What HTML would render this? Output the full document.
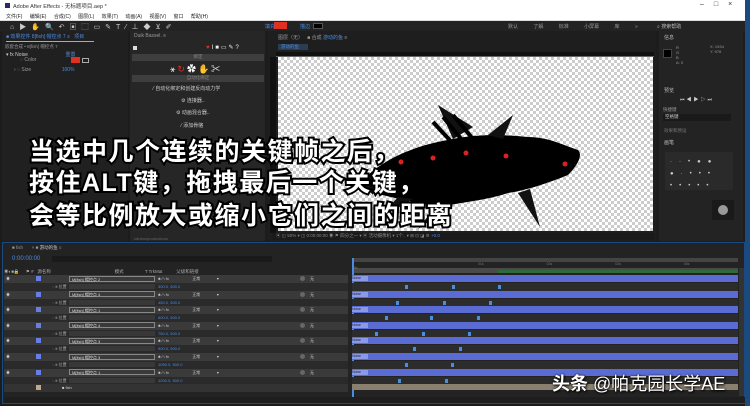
<!DOCTYPE html>
<html><head><meta charset="utf-8"><style>
*{margin:0;padding:0;box-sizing:border-box}
body{width:750px;height:406px;overflow:hidden;background:#1c1c1c;position:relative;font-family:"Liberation Sans","Noto Sans CJK SC",sans-serif;font-size:5px;color:#999}
.a{position:absolute}
.chk{background-color:#fff;background-image:linear-gradient(45deg,#ccc 25%,transparent 25%,transparent 75%,#ccc 75%),linear-gradient(45deg,#ccc 25%,transparent 25%,transparent 75%,#ccc 75%);background-size:6px 6px;background-position:0 0,3px 3px}
.sub{position:absolute;left:29px;color:#fff;font-size:25px;font-weight:bold;-webkit-text-stroke:4px #000;paint-order:stroke fill;letter-spacing:1.5px;white-space:nowrap;line-height:28px;font-family:"Liberation Sans","Noto Sans CJK SC",sans-serif}
.row{position:absolute;left:4px;width:344px;height:8px}
.bar{position:absolute;left:352px;width:386px;height:7px;background:#5a6cd4}
.kf{position:absolute;width:3px;height:4px;background:#4a8ce0}
</style></head><body>
<div class="a" style="left:0;top:0;width:750px;height:11px;background:#fff"></div>
<div class="a" style="left:5px;top:3px;width:5px;height:5px;background:#2a2a6a"></div>
<div class="a" style="left:13px;top:2px;color:#333;font-size:5.5px">Adobe After Effects - 无标题项目.aep *</div>
<div class="a" style="left:700px;top:1px;color:#333;font-size:7px;letter-spacing:10px">–□×</div>
<div class="a" style="left:0;top:11px;width:750px;height:10px;background:#fff;border-bottom:1px solid #ddd"></div>
<div class="a" style="left:6px;top:13px;color:#222;font-size:5px;word-spacing:6px">文件(F) 编辑(E) 合成(C) 图层(L) 效果(T) 动画(A) 视图(V) 窗口 帮助(H)</div>
<div class="a" style="left:0;top:21px;width:745px;height:10px;background:#232323"></div>
<div class="a" style="left:10px;top:22px;color:#ccc;font-size:7px;letter-spacing:5px">⌂▶✋🔍↶▣⬚▭✎T⁄⊥◆⊻✐</div>
<div class="a" style="left:274px;top:22px;width:13px;height:7px;background:#e03020"></div>
<div class="a" style="left:265px;top:23px;color:#4a8ce0;font-size:5px">填充</div>
<div class="a" style="left:300px;top:23px;color:#4a8ce0;font-size:5px">描边</div>
<div class="a" style="left:313px;top:23px;width:10px;height:6px;background:#000;border:1px solid #555"></div>
<div class="a" style="left:508px;top:23px;color:#999;font-size:5px;word-spacing:14px">默认 了解 标准 小屏幕 库 »</div>
<div class="a" style="left:657px;top:23px;color:#bbb;font-size:5px">⌕ 搜索帮助</div>
<div class="a" style="left:2px;top:31px;width:126px;height:210px;background:#202020"></div>
<div class="a" style="left:6px;top:33px;color:#4a8ce0;font-size:5px">■ 效果控件 8[fish] 帽控点 7 ≡ &nbsp; 项目</div>
<div class="a" style="left:6px;top:41px;width:88px;height:1px;background:#aaa"></div>
<div class="a" style="left:5px;top:44px;font-size:4.5px">嵌套合成 • 8[fish] 帽控点 7</div>
<div class="a" style="left:6px;top:51px;color:#ccc">▾ fx Noise &nbsp; &nbsp; &nbsp; &nbsp; &nbsp; &nbsp; &nbsp; &nbsp; &nbsp; &nbsp; &nbsp; &nbsp; &nbsp; <span style="color:#4a8ce0">重置</span></div>
<div class="a" style="left:20px;top:57px">◌ Color</div>
<div class="a" style="left:71px;top:57px;width:9px;height:6px;background:#e03020"></div>
<div class="a" style="left:82px;top:58px;width:7px;height:5px;border:1px solid #aaa"></div>
<div class="a" style="left:14px;top:67px">› ◌ Size &nbsp; &nbsp; &nbsp; &nbsp; &nbsp; &nbsp; &nbsp; &nbsp; &nbsp; &nbsp; &nbsp;<span style="color:#4a8ce0">100%</span></div>
<div class="a" style="left:130px;top:31px;width:135px;height:210px;background:#262626"></div>
<div class="a" style="left:134px;top:33px;font-size:5px">Duik Bassel. ≡</div>
<div class="a" style="left:133px;top:46px;width:4px;height:4px;background:#ddd"></div>
<div class="a" style="left:206px;top:44px;color:#eee;font-size:6px;letter-spacing:2px"><span style="color:#e03020">♥</span>I■▭✎?</div>
<div class="a" style="left:132px;top:54px;width:132px;height:7px;background:#3e3e3e;color:#888;text-align:center;font-size:4.5px">绑定</div>
<div class="a" style="left:170px;top:62px;color:#fff;font-size:9px;letter-spacing:2px"><span>⚹</span><span style="color:#e03020">↻</span>✿✋✂</div>
<div class="a" style="left:132px;top:75px;width:132px;height:7px;background:#3e3e3e;color:#888;text-align:center;font-size:4.5px">自动化绑定</div>
<div class="a" style="left:153px;top:85px;color:#ccc;font-size:5px">⁄ 自动化绑定和创建反向动力学</div>
<div class="a" style="left:181px;top:97px;color:#ccc;font-size:5px">⚙ 连接器..</div>
<div class="a" style="left:176px;top:109px;color:#ccc;font-size:5px">⚙ 动画混合器..</div>
<div class="a" style="left:181px;top:122px;color:#ccc;font-size:5px">⁄ 添加骨骼</div>
<div class="a" style="left:134px;top:236px;font-size:4px;color:#666">rainboxproductions</div>
<div class="a" style="left:268px;top:31px;width:388px;height:210px;background:#1e1e1e"></div>
<div class="a" style="left:278px;top:34px;font-size:5px">图层（无） &nbsp; ■ 合成 <span style="color:#4a8ce0">游动的鱼</span> ≡</div>
<div class="a" style="left:278px;top:44px;width:30px;height:6px;background:#2c3d52;color:#4a8ce0;font-size:4.5px;padding-left:3px">游动的鱼</div>
<div class="a" style="left:276px;top:52px;width:378px;height:5px;background:#111;border-bottom:1px solid #666"></div>
<div class="a" style="left:270px;top:57px;width:6px;height:176px;background:#111"></div>
<div class="a chk" style="left:278px;top:57px;width:375px;height:174px"></div>
<svg class="a" style="left:278px;top:57px" width="375" height="174" viewBox="0 0 375 174">
<path d="M90 118 C110 100,140 88,170 83 C200 76,230 78,250 80 C270 80,285 88,300 93 C305 98,300 108,290 118 C270 126,250 133,230 136 C210 143,180 146,160 150 C140 146,110 140,90 134 Z" fill="#000"/>
<path d="M80 122 L100 114 L95 138 Z M175 82 L160 48 L195 70 Z M210 78 L235 58 L225 82 Z M160 146 L140 172 L175 148 Z M120 140 L100 162 L135 142 Z M240 136 L262 170 L252 132 Z" fill="#111"/>
<path d="M155 65 L180 92 M165 60 L190 90 M175 58 L200 88" stroke="#000" stroke-width="4"/>
<g fill="#e02020"><circle cx="123" cy="105" r="2.5"/><circle cx="155" cy="101" r="2.5"/><circle cx="188" cy="96" r="2.5"/><circle cx="228" cy="99" r="2.5"/><circle cx="287" cy="107" r="2.5"/></g>
</svg>
<div class="a" style="left:272px;top:233px;width:382px;height:7px;background:#1a1a1a;font-size:4.5px;color:#888;padding-left:4px">▣ ◱ 50% ▾ ◫ 0:00:00:00 ◉ ⚑ 四分之一 ▾ ▣ 活动摄像机 ▾ 1个.. ▾ ⊞ ⊡ ◪ ⚙ <span style="color:#4a8ce0">+0.0</span></div>
<div class="a" style="left:659px;top:31px;width:84px;height:210px;background:#232323"></div>
<div class="a" style="left:664px;top:34px;color:#bbb;font-size:5px">信息</div>
<div class="a" style="left:663px;top:49px;width:9px;height:9px;background:#000;border:1px solid #444"></div>
<div class="a" style="left:676px;top:45px;font-size:4px;line-height:5px">R<br>G<br>B<br>A: 0</div>
<div class="a" style="left:710px;top:44px;font-size:4px;line-height:5px">X: 1934<br>Y: 976</div>
<div class="a" style="left:664px;top:87px;color:#bbb;font-size:5px">预览</div>
<div class="a" style="left:680px;top:96px;color:#ccc;font-size:5px;letter-spacing:2px">⏮◀▶▷⏭</div>
<div class="a" style="left:663px;top:107px;font-size:4.5px">快捷键</div>
<div class="a" style="left:663px;top:114px;width:68px;height:7px;background:#1a1a1a;font-size:4.5px;color:#ccc;padding-left:2px">空格键</div>
<div class="a" style="left:664px;top:128px;font-size:4.5px;color:#777">效果和预设</div>
<div class="a" style="left:664px;top:139px;color:#bbb;font-size:5px">画笔</div>
<div class="a" style="left:665px;top:152px;width:68px;height:38px;background:#2a2a2a"></div>
<div class="a" style="left:670px;top:156px;color:#ccc;font-size:6px;line-height:12px;letter-spacing:7px">··•●●<br>●·•••<br>•••••</div>
<div class="a" style="left:712px;top:200px;width:22px;height:20px;background:#1a1a1a"></div>
<div class="a" style="left:718px;top:205px;width:10px;height:10px;border-radius:50%;background:#999"></div>
<div class="a" style="left:745px;top:0;width:5px;height:406px;background:#1a4a80"></div>
<div class="a" style="left:2px;top:242px;width:743px;height:162px;background:#232323;border:1px solid #1a4a80"></div>
<div class="a" style="left:12px;top:245px;font-size:4.5px">■ fish &nbsp; &nbsp; &nbsp; × ■ <span style="color:#ccc">游动的鱼</span> ≡</div>
<div class="a" style="left:12px;top:256px;color:#4a8ce0;font-size:6px">0:00:00:00</div>
<div class="a" style="left:52px;top:256px;width:220px;height:6px;background:#1a1a1a"></div>
<div class="a" style="left:4px;top:269px;width:344px;height:6px;font-size:4.5px;color:#aaa">◉◐■🔒 &nbsp; &nbsp; ⚑ # &nbsp; 源名称 &nbsp; &nbsp; &nbsp; &nbsp; &nbsp; &nbsp; &nbsp; &nbsp; &nbsp; &nbsp; &nbsp; &nbsp; &nbsp; &nbsp; &nbsp; &nbsp; &nbsp; &nbsp; &nbsp; &nbsp; &nbsp; &nbsp; &nbsp; &nbsp; &nbsp; 模式 &nbsp; &nbsp; &nbsp; &nbsp; &nbsp; &nbsp; &nbsp; &nbsp; T TrkMat &nbsp; &nbsp; &nbsp; &nbsp; &nbsp; 父级和链接</div>
<div class="a" style="left:352px;top:258px;width:386px;height:4px;background:#444"></div>
<div class="a" style="left:352px;top:268px;width:386px;height:5px;background:#4a4a4a"></div>
<div class="a" style="left:498px;top:270px;width:240px;height:3px;background:#2e6a3a"></div>
<div class="a" style="left:352px;top:262px;width:386px;height:5px;font-size:3.5px;color:#777;word-spacing:62px">&nbsp;&nbsp;01s 02s 03s 04s 05s</div>
<div class="a" style="left:352px;top:258px;width:2px;height:140px;background:#4a8ce0"></div>
<div id="rows"></div>
<script>
var h='',y=275,names=['2','4','1','4','3','3','1'],kfs=[[405,452,498],[396,443,489],[385,430,477],[375,422,468],[413,459],[405,451],[398,445]];
for(var i=0;i<7;i++){
 h+='<div class="row" style="top:'+y+'px;background:#3a3a3a"></div>';
 h+='<div class="a" style="left:6px;top:'+(y+1)+'px;font-size:4px;color:#ccc">◉</div>';
 h+='<div class="a" style="left:36px;top:'+(y+1)+'px;width:5px;height:5px;background:#6a7de0"></div>';
 h+='<div class="a" style="left:69px;top:'+(y+.5)+'px;width:86px;height:6px;border:1px solid #888;font-size:4px;color:#ddd;padding-left:2px">M[fish] 帽控点 '+names[i]+'</div>';
 h+='<div class="a" style="left:158px;top:'+(y+1)+'px;font-size:4px;color:#ccc">♣ ⁄ \\ fx &nbsp; &nbsp; &nbsp; &nbsp; &nbsp; &nbsp; &nbsp; &nbsp; &nbsp; &nbsp; 正常 &nbsp; &nbsp; &nbsp; &nbsp; &nbsp; &nbsp; &nbsp; ▾</div>';
 h+='<div class="a" style="left:300px;top:'+(y+1)+'px;width:5px;height:5px;border-radius:50%;background:#666"></div>';
 h+='<div class="a" style="left:310px;top:'+(y+1)+'px;font-size:4px;color:#ccc">无</div>';
 h+='<div class="bar" style="top:'+y+'px"></div>';
 h+='<div class="a" style="left:352px;top:'+(y+1)+'px;width:16px;height:5px;background:#8a9ae8;font-size:3.5px;color:#223">Noise</div>';
 var y2=y+8;
 h+='<div class="row" style="top:'+y2+'px;background:#2a2a2a"></div>';
 h+='<div class="a" style="left:52px;top:'+(y2+1)+'px;font-size:4px;color:#4a8ce0">◌ <span style="color:#aaa">lt 位置</span></div>';
 h+='<div class="a" style="left:69px;top:'+(y2+1)+'px;width:86px;height:5px;background:#383838"></div>';
 h+='<div class="a" style="left:158px;top:'+(y2+1)+'px;font-size:4px;color:#4a8ce0">'+(300+i*150)+'.0, 500.0</div>';
 h+='<div class="a" style="left:352px;top:'+y2+'px;width:386px;height:8px;background:#2c2c2c"></div>';
 for(var k=0;k<kfs[i].length;k++)h+='<div class="kf" style="left:'+kfs[i][k]+'px;top:'+(y2+2)+'px"></div>';
 y+=15.6;
}
h+='<div class="row" style="top:'+y+'px;background:#333"></div>';
h+='<div class="a" style="left:36px;top:'+(y+1)+'px;width:5px;height:5px;background:#c0a888"></div>';
h+='<div class="a" style="left:62px;top:'+(y+1)+'px;font-size:4px;color:#ccc">■ fish</div>';
h+='<div class="a" style="left:352px;top:'+y+'px;width:386px;height:6px;background:#8a8070"></div>';
document.getElementById('rows').innerHTML=h;
</script>
<div class="a" style="left:4px;top:397px;width:741px;height:6px;background:#1e1e1e"></div>
<div class="a" style="left:739px;top:268px;width:5px;height:128px;background:#333"></div>
<div class="sub" style="top:138px">当选中几个连续的关键帧之后，</div>
<div class="sub" style="top:169px">按住ALT键，拖拽最后一个关键，</div>
<div class="sub" style="top:202px">会等比例放大或缩小它们之间的距离</div>
<div class="a" style="left:552px;top:370px;color:#fff;font-size:18px;white-space:nowrap;text-shadow:0 0 2px #000,1px 1px 2px #000"><b>头条</b> @帕克园长学AE</div>
</body></html>
